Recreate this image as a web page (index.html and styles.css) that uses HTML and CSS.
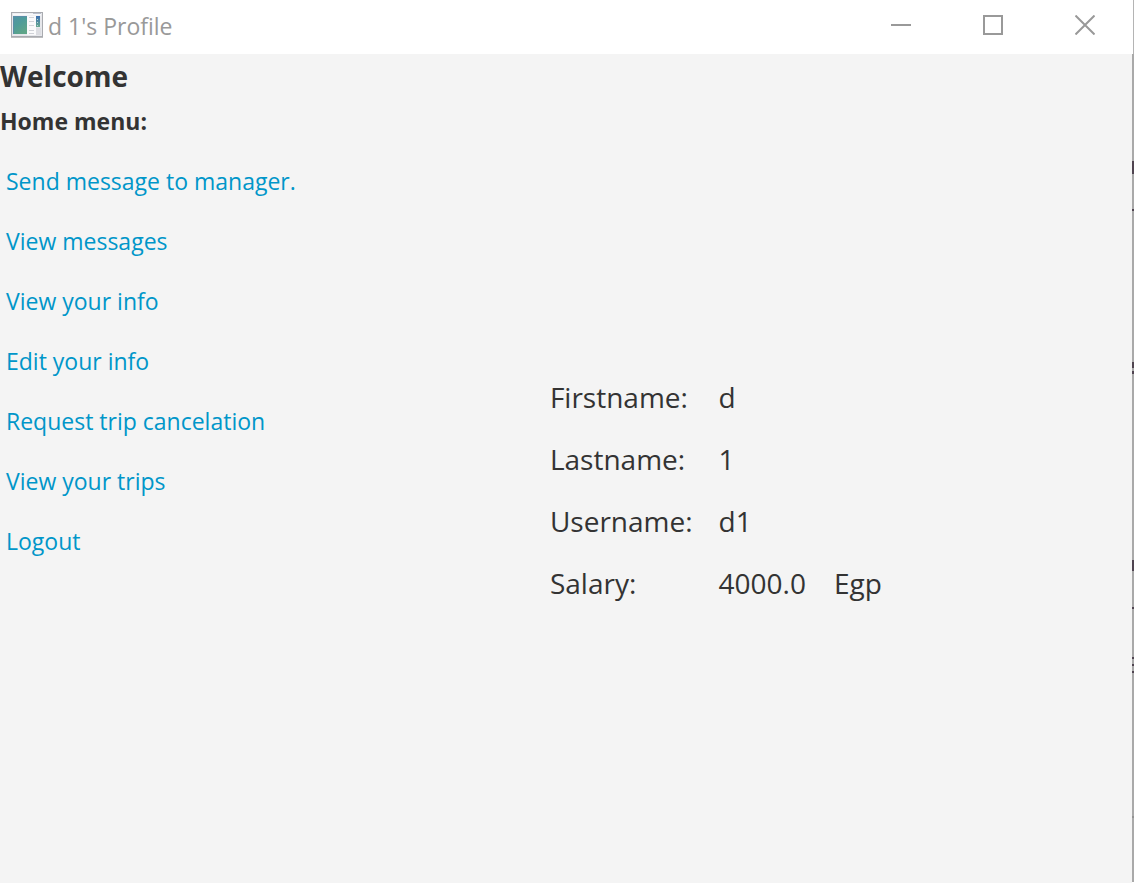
FILE: index.html
```html
<!DOCTYPE html>
<html lang="en">
<head>
<meta charset="utf-8">
<title>d 1's Profile</title>
<link rel="stylesheet" href="styles.css">
</head>
<body>
<div class="window">
  <header class="titlebar">
    <svg class="app-icon" width="32" height="26" viewBox="0 0 32 26" aria-hidden="true">
      <defs>
        <linearGradient id="pane" x1="0" y1="0" x2="0.6" y2="1">
          <stop offset="0" stop-color="#5292a6"/>
          <stop offset="0.5" stop-color="#4e9c99"/>
          <stop offset="1" stop-color="#5fa588"/>
        </linearGradient>
        <linearGradient id="side" x1="0" y1="0" x2="0" y2="1">
          <stop offset="0" stop-color="#3c6fb0"/>
          <stop offset="1" stop-color="#68a98f"/>
        </linearGradient>
      </defs>
      <rect x="0.5" y="0.5" width="31" height="24" fill="#e6e7eb" stroke="#a9abb0"/>
      <path d="M0 25.5H32" stroke="#bdbdbf"/>
      <path d="M2 2.5H30" stroke="#f8f9fb" stroke-width="2"/>
      <path d="M22 1.500H30" stroke="#b9bfcc"/>
      <rect x="2" y="4" width="14" height="18" fill="url(#pane)"/>
      <path d="M2.500 22V4.500H16" fill="none" stroke="#5a8ea8"/>
      <rect x="16" y="4" width="9" height="19" fill="#fafafb"/>
      <path d="M18 5.500H23M18 9.500H23M18 13.500H23M18 18.500H23M18 21.500H23" stroke="#d0d2d8"/>
      <rect x="25" y="4" width="4" height="11" fill="url(#side)"/>
      <path d="M26 7.500H27M26 10.500H27M26 13.500H27" stroke="#b8d4d8"/>
      <rect x="25" y="16" width="5" height="7" fill="#dcdde2"/>
    </svg>
    <h1 class="title">d 1's Profile</h1>
    <div class="controls">
      <button class="control" type="button" aria-label="Minimize">
        <svg width="20" height="20" viewBox="0 0 20 20"><path d="M0 10H20"/></svg>
      </button>
      <button class="control" type="button" aria-label="Maximize">
        <svg width="20" height="20" viewBox="0 0 20 20"><path d="M1 1H19V19H1Z"/></svg>
      </button>
      <button class="control" type="button" aria-label="Close">
        <svg width="20" height="20" viewBox="0 0 20 20"><path d="M0.500 0.500L19.500 19.500M19.500 0.500L0.500 19.500"/></svg>
      </button>
    </div>
  </header>
  <div class="content">
    <h2 class="welcome">Welcome</h2>
    <div class="body">
      <nav class="menu">
        <h3 class="menu-title">Home menu:</h3>
        <a class="menu-link" href="#send">Send message to manager.</a>
        <a class="menu-link" href="#messages">View messages</a>
        <a class="menu-link" href="#info">View your info</a>
        <a class="menu-link" href="#edit">Edit your info</a>
        <a class="menu-link" href="#cancel">Request trip cancelation</a>
        <a class="menu-link" href="#trips">View your trips</a>
        <a class="menu-link" href="#logout">Logout</a>
      </nav>
      <main class="details">
        <table class="info">
          <tr><th scope="row">Firstname:</th><td>d</td><td></td></tr>
          <tr><th scope="row">Lastname:</th><td>1</td><td></td></tr>
          <tr><th scope="row">Username:</th><td>d1</td><td></td></tr>
          <tr><th scope="row">Salary:</th><td>4000.0</td><td>Egp</td></tr>
        </table>
      </main>
    </div>
  </div>
  <svg class="edge" width="2" height="884" viewBox="0 0 2 884" aria-hidden="true">
    <path d="M1.500 0V54" stroke="#b4b4b4"/>
    <path d="M1 54V882" stroke="#a9a9a9" stroke-width="2"/>
    <path d="M1 161V174M1 209V211M1 362V368M1 371V374M1 560V571M1 607V609M1 657V659M1 664V666M1 671V673" stroke="#4f4450" stroke-width="2"/>
    <path d="M1 816V818" stroke="#929292" stroke-width="2"/>
  </svg>
</div>
</body>
</html>
```
FILE: styles.css
```css
* {
  box-sizing: border-box;
}

body {
  margin: 0;
  background: #fff;
  color: #333;
  font-family: "Open Sans", "Noto Sans", sans-serif;
}

.window {
  position: relative;
  display: flex;
  flex-direction: column;
  min-height: 100vh;
  overflow: hidden;
  padding-bottom: 1px;
}

.titlebar {
  display: flex;
  align-items: center;
  height: 54px;
  padding: 0 3px 4px 11px;
  background: #fff;
}

.title {
  flex: 1;
  margin: 0;
  padding: 2px 0 0 5px;
  color: #999;
  font-size: 23px;
  font-weight: 400;
  line-height: 32px;
}

.controls {
  display: flex;
}

.control {
  display: flex;
  align-items: center;
  justify-content: center;
  width: 92px;
  height: 50px;
  padding: 0;
  border: 0;
  background: none;
}

.control path {
  fill: none;
  stroke: #999;
  stroke-width: 2;
}

.content {
  display: flex;
  flex: 1;
  flex-direction: column;
  margin-right: 2px;
  background: #f4f4f4;
}

.welcome {
  margin: 0;
  font-size: 28px;
  font-weight: 700;
  line-height: 44px;
}

.body {
  display: flex;
  flex: 1;
}

.menu {
  display: flex;
  flex-direction: column;
  align-items: flex-start;
  gap: 28px;
  padding-right: 4px;
}

.menu-title {
  margin: 7px 0 0;
  font-size: 23px;
  font-weight: 700;
  line-height: 32px;
}

.menu-link {
  padding-left: 6px;
  color: #0096c9;
  font-size: 23px;
  line-height: 32px;
  text-decoration: none;
}

.details {
  display: flex;
  flex: 1;
  align-items: center;
  justify-content: center;
  padding-bottom: 2px;
}

.info {
  border-collapse: collapse;
  font-size: 28px;
  line-height: 62px;
}

.info th,
.info td {
  padding: 0 0 0 26px;
  font-weight: 400;
  text-align: left;
}

.info th {
  padding-left: 0;
}

.info td:last-child {
  padding-left: 28px;
}

.edge {
  position: absolute;
  top: 0;
  right: 0;
}
```
